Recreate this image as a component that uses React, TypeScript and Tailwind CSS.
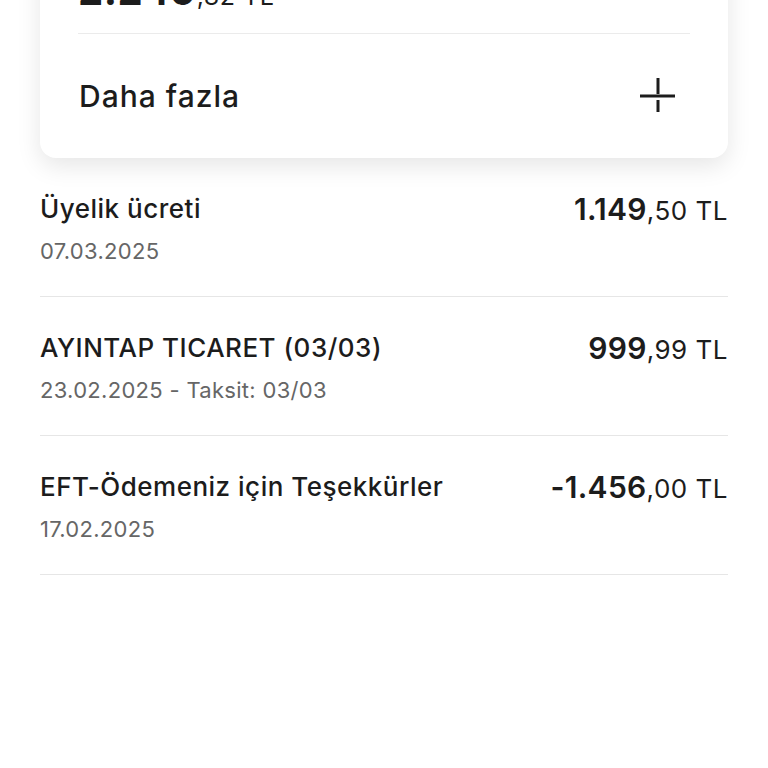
const rows = [
  { title: "Üyelik ücreti", date: "07.03.2025", whole: "1.149", cents: ",50 TL" },
  { title: "AYINTAP TICARET (03/03)", date: "23.02.2025 - Taksit: 03/03", whole: "999", cents: ",99 TL" },
  { title: "EFT-Ödemeniz için Teşekkürler", date: "17.02.2025", whole: "-1.456", cents: ",00 TL" },
];

function PlusIcon() {
  return (
    <svg width="40" height="40" viewBox="0 0 40 40" fill="none" stroke="#1c1c1c" strokeWidth={3}>
      <path d="M20 2v16M2 20h35M20 24v12" />
    </svg>
  );
}

export default function App() {
  return (
    <div className="min-h-[768px] bg-white overflow-hidden text-[#1c1c1c]" style={{ fontFamily: "Inter, 'Noto Sans', sans-serif" }}>
      {/* summary card, scrolled partly out of view */}
      <div className="mx-[40px] -mt-[57px] rounded-[16px] bg-white shadow-[0_8px_24px_rgba(0,0,0,0.10)]">
        <div className="mx-[38px] pt-[24px] pb-[18px] border-b border-[#ebebeb]">
          <div className="h-[48px] flex items-baseline leading-[48px]">
            <span className="text-[40px] font-bold tracking-[0.5px]">2.249</span>
            <span className="text-[25px] tracking-[0.5px]">,82 TL</span>
          </div>
        </div>
        <div className="h-[124px] flex items-center justify-between pl-[39px] pr-[50px]">
          <span className="text-[30px] font-medium tracking-[1px]">Daha fazla</span>
          <PlusIcon />
        </div>
      </div>

      <div className="mx-[40px]">
        {rows.map((r, i) => (
          <div key={i} className="pt-[36px] pb-[31px] border-b border-[#e6e6e6] flex justify-between">
            <div className="flex flex-col gap-[13px]">
              <span className="text-[26px] leading-[30px] font-medium tracking-[0.5px]">{r.title}</span>
              <span className="text-[22px] leading-[28px] tracking-[0.3px] text-[#666666]">{r.date}</span>
            </div>
            <div className="h-[30px] flex items-baseline leading-[30px]">
              <span className="text-[30px] font-semibold tracking-[0.3px]">{r.whole}</span>
              <span className="text-[26px] tracking-[0.5px]">{r.cents}</span>
            </div>
          </div>
        ))}
      </div>
    </div>
  );
}
